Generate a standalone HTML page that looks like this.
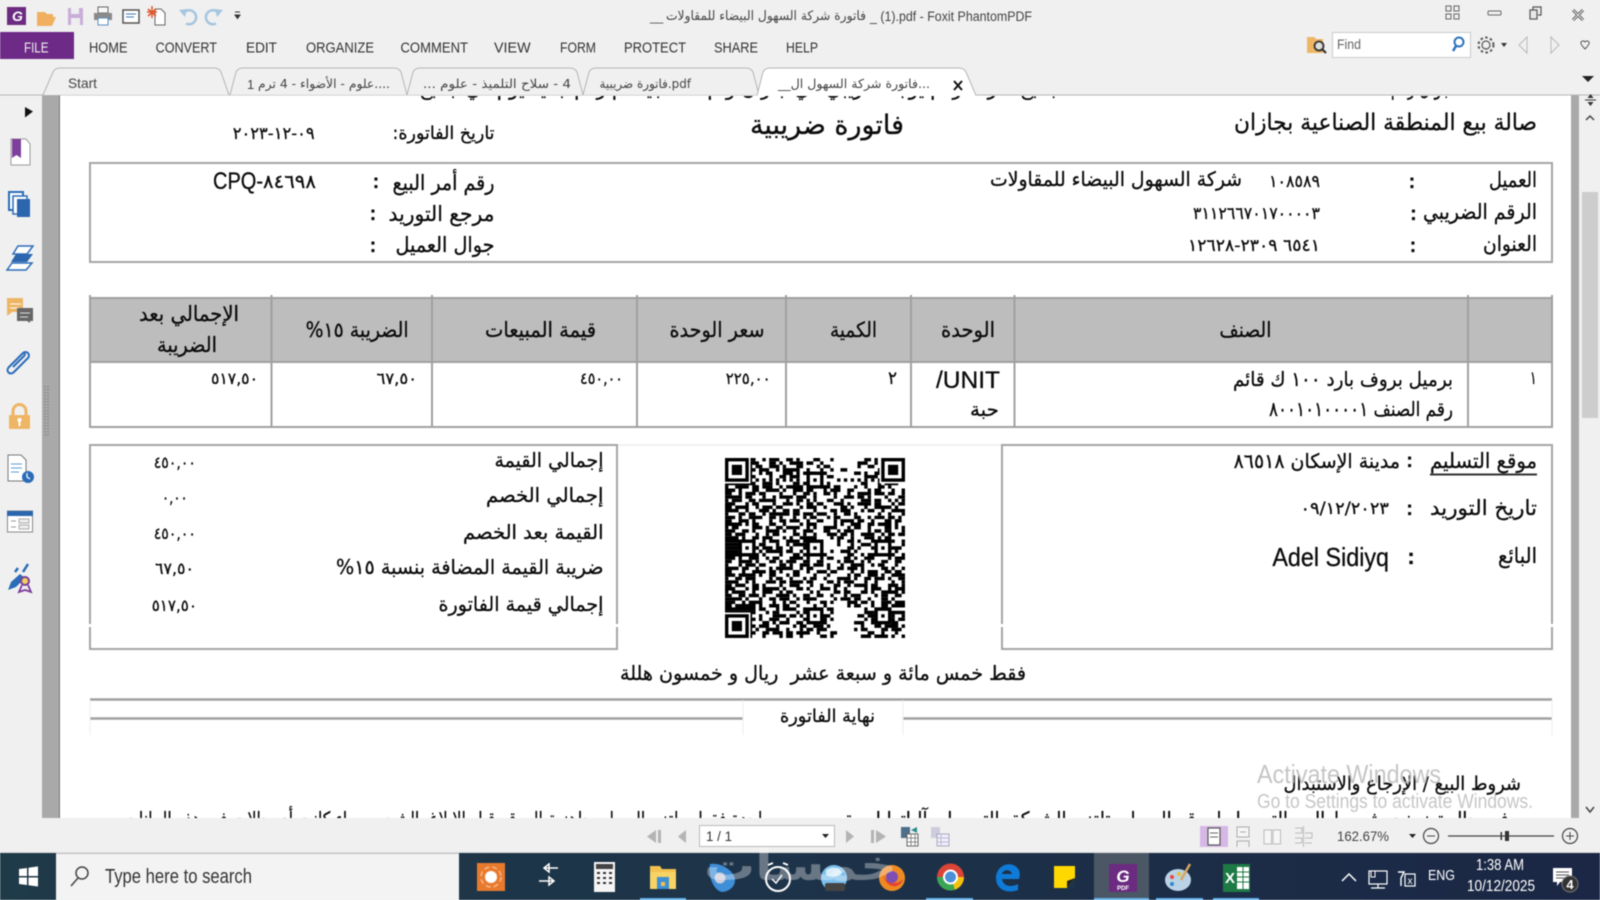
<!DOCTYPE html>
<html lang="en"><head><meta charset="utf-8"><title>Foxit PhantomPDF</title>
<style>
html,body{margin:0;padding:0;width:1600px;height:900px;overflow:hidden;background:#f0f0f0}
svg{display:block;filter:blur(.55px)}
text{fill:#1a1a1a;white-space:pre}
.r{direction:rtl;font-family:"DejaVu Sans","Liberation Sans",sans-serif}
.n{direction:ltr;font-family:"DejaVu Sans","Liberation Sans",sans-serif}
.l{direction:ltr;font-family:"Liberation Sans","DejaVu Sans",sans-serif}
.m{font-size:15px;fill:#333}
.d{stroke:#a6a6a6;stroke-width:2;fill:none}
.tab{fill:#f0f0f0;stroke:#b5b5b5;stroke-width:1}
.doc text{fill:#0c0c0c;stroke:#0c0c0c;stroke-width:.3px}
</style></head><body>
<svg xmlns="http://www.w3.org/2000/svg" width="1600" height="900" viewBox="0 0 1600 900">
<defs>
<clipPath id="page"><rect x="60" y="96" width="1511" height="722"/></clipPath>
<g id="fi"><rect x="-.5" y="-.5" width="8" height="8" fill="#fff"/><rect width="7" height="7" fill="#000"/><rect x="1" y="1" width="5" height="5" fill="#fff"/><rect x="2" y="2" width="3" height="3" fill="#000"/></g>
<g id="al"><rect width="5" height="5" fill="#000"/><rect x="1" y="1" width="3" height="3" fill="#fff"/><rect x="2" y="2" width="1" height="1" fill="#000"/></g>
<linearGradient id="tb" x1="0" x2="1" y1="0" y2="0"><stop offset="0" stop-color="#1f3a48"/><stop offset=".5" stop-color="#1d3349"/><stop offset="1" stop-color="#1b2745"/></linearGradient>
</defs>

<!-- chrome base -->
<rect width="1600" height="900" fill="#f0f0f0"/>
<rect x="60" y="95" width="1511" height="723" fill="#fff"/>
<rect x="42" y="95" width="17" height="723" fill="#a9a9a9"/><rect x="59" y="95" width="1" height="723" fill="#777"/>
<rect x="1571" y="95" width="8" height="723" fill="#a9a9a9"/>
<rect x="1582" y="192" width="16" height="226" fill="#cdcdcd"/>
<path d="M45 386v51M48 386v51" stroke="#8a8a8a" stroke-width="1.5" stroke-dasharray="1.5 1.5"/>

<!-- quick toolbar -->
<rect x="7" y="7" width="19" height="18" fill="#6a2b80"/><text class="l" x="12" y="21" font-size="14" font-weight="700" font-style="italic" style="fill:#fff">G</text>
<path d="M37 12h8l2 2h6v3h3l-4 9H37z" fill="#f0b060"/>
<rect x="68" y="8" width="15" height="17" fill="#c9aedb"/><rect x="71" y="8" width="8" height="6" fill="#eee"/><rect x="71" y="18" width="9" height="7" fill="#eee"/>
<rect x="98" y="7" width="10" height="6" fill="#f7f7f7" stroke="#666"/><rect x="94" y="13" width="18" height="7" fill="#8a8a8a"/><rect x="98" y="18" width="10" height="7" fill="#fff" stroke="#5b8fc6"/>
<rect x="123" y="10" width="16" height="13" fill="#fff" stroke="#555" stroke-width="1.5"/><path d="M126 14h10M126 17h8" stroke="#3a78b8"/>
<path d="M155 9h6l4 4v12h-10z" fill="#fff" stroke="#666"/><path d="M148 9l8 7M156 9l-8 7M152 6v12M147 12h10" stroke="#e0572a" stroke-width="1.5"/>
<path d="M184 12.500a7 7 0 1 1 2 11" fill="none" stroke="#a5c6e0" stroke-width="2.500"/><path d="M179 10l8-1-2 8z" fill="#a5c6e0"/>
<path d="M218 12.500a7 7 0 1 0-2 11" fill="none" stroke="#a5c6e0" stroke-width="2.500"/><path d="M223 10l-8-1 2 8z" fill="#a5c6e0"/>
<path d="M235 12h5M235 15h5l-2.500 3.500z" stroke="#333" fill="#333"/>

<!-- title -->
<text class="r" x="866" y="20" font-size="13" textLength="200" lengthAdjust="spacingAndGlyphs" style="fill:#444">فاتورة شركة السهول البيضاء للمقاولات</text>
<text class="l" x="650" y="21" font-size="12" style="fill:#444">__</text>
<text class="l" x="870" y="21" font-size="13.500" textLength="162" lengthAdjust="spacingAndGlyphs" style="fill:#444">_ (1).pdf - Foxit PhantomPDF</text>

<!-- window controls -->
<path d="M1446 6h5v5h-5zM1454 6h5v5h-5zM1446 14h5v5h-5zM1454 14h5v5h-5z" fill="none" stroke="#666" stroke-width="1"/>
<rect x="1488" y="11" width="13" height="4" fill="none" stroke="#666" stroke-width="1" rx="1"/>
<rect x="1530" y="10" width="7" height="9" fill="#e8e8e8" stroke="#555" stroke-width="1.200"/><path d="M1533 10V7h8v8h-3" fill="none" stroke="#555" stroke-width="1.200"/>
<path d="M1573 10l10 10M1583 10l-10 10" stroke="#555" stroke-width="3"/><path d="M1573 10l10 10M1583 10l-10 10" stroke="#f0f0f0" stroke-width="1"/>

<!-- menu -->
<rect x="0" y="32" width="74" height="27" fill="#6d2a86"/>
<text class="l m" x="24" y="52.500" textLength="24.500" lengthAdjust="spacingAndGlyphs" style="fill:#eee">FILE</text>
<text class="l m" x="89" y="52.500" textLength="38.500" lengthAdjust="spacingAndGlyphs">HOME</text>
<text class="l m" x="155.600" y="52.500" textLength="61.400" lengthAdjust="spacingAndGlyphs">CONVERT</text>
<text class="l m" x="246" y="52.500" textLength="31" lengthAdjust="spacingAndGlyphs">EDIT</text>
<text class="l m" x="306" y="52.500" textLength="68" lengthAdjust="spacingAndGlyphs">ORGANIZE</text>
<text class="l m" x="400.500" y="52.500" textLength="67.500" lengthAdjust="spacingAndGlyphs">COMMENT</text>
<text class="l m" x="494" y="52.500" textLength="36.600" lengthAdjust="spacingAndGlyphs">VIEW</text>
<text class="l m" x="560" y="52.500" textLength="36" lengthAdjust="spacingAndGlyphs">FORM</text>
<text class="l m" x="624" y="52.500" textLength="62" lengthAdjust="spacingAndGlyphs">PROTECT</text>
<text class="l m" x="714" y="52.500" textLength="44" lengthAdjust="spacingAndGlyphs">SHARE</text>
<text class="l m" x="786" y="52.500" textLength="32" lengthAdjust="spacingAndGlyphs">HELP</text>

<!-- find -->
<path d="M1307 37h7l2 2h7v14h-16z" fill="#eeb565"/><circle cx="1319" cy="46" r="4.500" fill="#ddd" stroke="#333" stroke-width="1.800"/><path d="M1322 49l4 4" stroke="#333" stroke-width="2.200"/>
<rect x="1332.500" y="32.500" width="138" height="25" fill="#fff" stroke="#ccc"/>
<text class="l" x="1337" y="49" font-size="14" textLength="24" lengthAdjust="spacingAndGlyphs" style="fill:#666">Find</text>
<circle cx="1459" cy="42" r="4.500" fill="none" stroke="#2d73bd" stroke-width="2"/><path d="M1456 46l-3 5" stroke="#2d73bd" stroke-width="2.500"/>
<circle cx="1486" cy="45" r="4" fill="none" stroke="#555" stroke-width="1.200"/><circle cx="1486" cy="45" r="7.500" fill="none" stroke="#555" stroke-width="2" stroke-dasharray="2.500 2.400"/>
<path d="M1501 43h6l-3 4z" fill="#333"/>
<path d="M1527 37l-8 8 8 8zM1551 37l8 8-8 8z" fill="#f0f0f0" stroke="#b9b9b9"/>
<path d="M1581 42c2-2 3-1 4 0 1-1 2-2 4 0 1 2-2 5-4 7-2-2-5-5-4-7z" fill="none" stroke="#555"/>

<!-- tabs -->
<path d="M0 95H1600" stroke="#b5b5b5"/>
<path class="tab" d="M43 95L53 72Q55 68 60 68H214Q219 68 221 72L229 95"/>
<path class="tab" d="M230 95L236 72Q238 68 243 68H394Q399 68 401 72L407 95"/>
<path class="tab" d="M407 95L413 72Q415 68 420 68H570Q575 68 577 72L583 95"/>
<path class="tab" d="M583 95L589 72Q591 68 596 68H746Q751 68 753 72L759 95"/>
<path d="M757 95.500L763 72Q765 68 770 68H959Q964 68 966 72L976 95.500" fill="#fff" stroke="#b5b5b5"/>
<text class="l" x="68" y="88" font-size="14" textLength="29" lengthAdjust="spacingAndGlyphs" style="fill:#444">Start</text>
<text class="l" x="247" y="89" font-size="13" style="fill:#444">1</text>
<text class="r" x="390" y="88" font-size="12.500" textLength="132" lengthAdjust="spacingAndGlyphs" style="fill:#444">....علوم - الأضواء - 4 ترم</text>
<text class="r" x="571" y="88" font-size="12.500" textLength="148" lengthAdjust="spacingAndGlyphs" style="fill:#444">4 - سلاح التلميذ - علوم ...</text>
<text class="n" x="599.500" y="88" font-size="12.500" textLength="91.500" lengthAdjust="spacingAndGlyphs" style="fill:#444">فاتورة ضريبية.pdf</text>
<text class="r" x="930" y="88" font-size="12.500" textLength="152" lengthAdjust="spacingAndGlyphs" style="fill:#444">...فاتورة شركة السهول ال__</text>
<path d="M954 81l8 9M962 81l-8 9" stroke="#111" stroke-width="2"/>
<path d="M1582 76h12l-6 6z" fill="#222"/>

<!-- sidebar icons -->
<path d="M25 107l8 4.500-8 6z" fill="#111"/>
<path d="M11 139h15l4 5v21H11z" fill="#fff" stroke="#9a9a9a"/><path d="M12 139h9v19l-4.500-3-4.500 3z" fill="#7d3f9c"/>
<rect x="9" y="192" width="14" height="18" fill="#fff" stroke="#2b6cb8" stroke-width="2"/><rect x="13" y="196" width="14" height="18" fill="#fff" stroke="#2b6cb8" stroke-width="1.500"/><rect x="17" y="199" width="13" height="18" fill="#2b66ae"/>
<path d="M13 254l5-8h15l-6 8z" fill="#fff" stroke="#2b6cb8" stroke-width="1.500"/><path d="M11 262l5-8h17l-6 8z" fill="#2b66ae"/><path d="M7 270l5-7h20l-6 7z" fill="#fff" stroke="#2b6cb8" stroke-width="1.500"/>
<path d="M7 298h16v14H12l-5 4z" fill="#eeb565"/><path d="M10 304h11M10 308h9" stroke="#fff"/><path d="M17 308h16v13h-3v2l-3-2H17z" fill="#666"/><path d="M20 313h10M20 317h8" stroke="#ddd"/>
<path d="M13 363l10-10c3-3 8 1 5 5l-14 14c-4 4-9-1-5-5l13-13c2-2 4 0 2 2l-11 11" fill="none" stroke="#2b6cb8" stroke-width="2"/>
<path d="M13 417v-6a6.500 6.500 0 0 1 13 0v6" fill="none" stroke="#eeb565" stroke-width="3"/><rect x="9" y="415" width="21" height="14" rx="1" fill="#eeb565"/><circle cx="19.500" cy="420" r="2" fill="#fff"/><rect x="18.500" y="420" width="2" height="6" fill="#fff"/>
<path d="M8 455h13l5 5v21H8z" fill="#fff" stroke="#777"/><path d="M11 464h11M11 468h11M11 472h8" stroke="#5b9bd5"/><circle cx="28" cy="477" r="6" fill="#2b6cb8"/><path d="M27 473v4l3 2" stroke="#fff" stroke-width="1.200" fill="none"/>
<rect x="7.500" y="511" width="25" height="21" fill="#fff" stroke="#888"/><rect x="7" y="511" width="26" height="5" fill="#2b66ae"/><rect x="19" y="519" width="10" height="4" fill="#eee" stroke="#999" stroke-width=".8"/><rect x="19" y="525" width="10" height="4" fill="#eee" stroke="#999" stroke-width=".8"/><path d="M11 521h5M11 527h5" stroke="#999"/>
<path d="M8 590l3-8 9-8 5 4-9 9z" fill="#2b6cb8"/><path d="M23 572l5-8M18 568l-3 4" stroke="#2b6cb8" stroke-width="2.500"/><circle cx="25" cy="581" r="4" fill="#f0d060" stroke="#7d3f9c" stroke-width="2"/><path d="M22 585l-3 7 6-2 6 2-3-7" fill="none" stroke="#7d3f9c" stroke-width="1.800"/>

<!-- scrollbar glyphs -->
<path d="M1585 100h11" stroke="#333"/><path d="M1590.500 94l-3 4h6zM1590.500 106l-3-4h6z" fill="#333"/>
<path d="M1586 120l4-4 4 4" fill="none" stroke="#444" stroke-width="1.500"/>
<path d="M1586 807l4 5 4-5" fill="none" stroke="#444" stroke-width="1.500"/>

<!-- document -->
<g clip-path="url(#page)" class="doc">
<text class="r" x="1451" y="95" font-size="20" textLength="60" lengthAdjust="spacingAndGlyphs">جوال رقم</text>
<text class="r" x="1060" y="95" font-size="20" textLength="640" lengthAdjust="spacingAndGlyphs">جميع شركة رقم يوجد ضريبي في جازان وتم ذلك جيد ثم رقم جديد يوم في جميع</text>

<text class="r" x="1537" y="130" font-size="23" textLength="303" lengthAdjust="spacingAndGlyphs">صالة بيع المنطقة الصناعية بجازان</text>
<text class="r" x="904" y="134" font-size="27" textLength="154" lengthAdjust="spacingAndGlyphs">فاتورة ضريبية</text>
<text class="r" x="494.500" y="139" font-size="18" textLength="102" lengthAdjust="spacingAndGlyphs">تاريخ الفاتورة:</text>
<text class="n" x="232.700" y="139" font-size="17" textLength="82" lengthAdjust="spacingAndGlyphs">٠٩-١٢-٢٠٢٣</text>

<rect class="d" x="90" y="163" width="1462" height="99"/>
<path d="M90 262H1552" stroke="#a6a6a6" stroke-width="1.500"/>
<text class="r" x="494.500" y="190" font-size="21" textLength="102" lengthAdjust="spacingAndGlyphs">رقم أمر البيع</text>
<text class="l" x="376" y="188" font-size="20" font-weight="700" text-anchor="middle">:</text>
<text class="l" x="213" y="189" font-size="24" textLength="50" lengthAdjust="spacingAndGlyphs">CPQ-</text>
<text class="n" x="263" y="188" font-size="19" textLength="53" lengthAdjust="spacingAndGlyphs">٨٤٦٩٨</text>
<text class="r" x="494.500" y="221" font-size="21" textLength="106" lengthAdjust="spacingAndGlyphs">مرجع التوريد</text>
<text class="l" x="373" y="220" font-size="20" font-weight="700" text-anchor="middle">:</text>
<text class="r" x="494.500" y="252" font-size="21" textLength="99" lengthAdjust="spacingAndGlyphs">جوال العميل</text>
<text class="l" x="373" y="252" font-size="20" font-weight="700" text-anchor="middle">:</text>

<text class="r" x="1537" y="187" font-size="21" textLength="48" lengthAdjust="spacingAndGlyphs">العميل</text>
<text class="l" x="1412" y="188" font-size="20" font-weight="700" text-anchor="middle">:</text>
<text class="n" x="1269" y="187" font-size="17" textLength="51" lengthAdjust="spacingAndGlyphs">١٠٨٥٨٩</text>
<text class="r" x="1242" y="186" font-size="20" textLength="252" lengthAdjust="spacingAndGlyphs">شركة السهول البيضاء للمقاولات</text>
<text class="r" x="1537" y="219" font-size="21" textLength="114" lengthAdjust="spacingAndGlyphs">الرقم الضريبي</text>
<text class="l" x="1413.500" y="220" font-size="20" font-weight="700" text-anchor="middle">:</text>
<text class="n" x="1193" y="219" font-size="17" textLength="127" lengthAdjust="spacingAndGlyphs">٣١١٢٦٦٧٠١٧٠٠٠٠٣</text>
<text class="r" x="1537" y="251" font-size="21" textLength="54" lengthAdjust="spacingAndGlyphs">العنوان</text>
<text class="l" x="1413" y="252" font-size="20" font-weight="700" text-anchor="middle">:</text>
<text class="r" x="1320" y="251" font-size="17" textLength="132" lengthAdjust="spacingAndGlyphs">٦٥٤١ ٢٣٠٩-١٢٦٢٨</text>

<!-- table -->
<rect x="90" y="298" width="1462" height="64" fill="#bdbdbd"/>
<path d="M90 298H1552M90 362H1552M90 427H1552" stroke="#a0a0a0" stroke-width="2"/>
<path d="M90 295V428M271.500 295V428M432 295V428M637 295V428M786 295V428M911 295V428M1014.500 295V428M1468 295V428M1552 295V428" stroke="#a0a0a0" stroke-width="2"/>
<text class="r" x="1271.400" y="337" font-size="21" textLength="52" lengthAdjust="spacingAndGlyphs">الصنف</text>
<text class="r" x="995" y="337" font-size="21" textLength="54" lengthAdjust="spacingAndGlyphs">الوحدة</text>
<text class="r" x="877" y="337" font-size="21" textLength="47" lengthAdjust="spacingAndGlyphs">الكمية</text>
<text class="r" x="764.500" y="337" font-size="21" textLength="95" lengthAdjust="spacingAndGlyphs">سعر الوحدة</text>
<text class="r" x="596" y="337" font-size="21" textLength="111" lengthAdjust="spacingAndGlyphs">قيمة المبيعات</text>
<text class="r" x="408.600" y="337" font-size="21" textLength="103" lengthAdjust="spacingAndGlyphs">الضريبة ١٥%</text>
<text class="r" x="239" y="321" font-size="21" textLength="100" lengthAdjust="spacingAndGlyphs">الإجمالي بعد</text>
<text class="r" x="217" y="352" font-size="21" textLength="60" lengthAdjust="spacingAndGlyphs">الضريبة</text>

<text class="n" x="211" y="384" font-size="16" textLength="47" lengthAdjust="spacingAndGlyphs">٥١٧,٥٠</text>
<text class="n" x="376.600" y="384" font-size="16" textLength="40.400" lengthAdjust="spacingAndGlyphs">٦٧,٥٠</text>
<text class="n" x="580" y="384" font-size="16" textLength="43" lengthAdjust="spacingAndGlyphs">٤٥٠,٠٠</text>
<text class="n" x="725.700" y="384" font-size="16" textLength="45" lengthAdjust="spacingAndGlyphs">٢٢٥,٠٠</text>
<text class="n" x="888" y="384" font-size="18" textLength="9" lengthAdjust="spacingAndGlyphs">٢</text>
<text class="l" x="936" y="388" font-size="24" textLength="64" lengthAdjust="spacingAndGlyphs">/UNIT</text>
<text class="r" x="999" y="416" font-size="19" textLength="29" lengthAdjust="spacingAndGlyphs">حبة</text>
<text class="r" x="1453" y="386" font-size="20" textLength="220" lengthAdjust="spacingAndGlyphs">برميل بروف بارد ١٠٠ ك قائم</text>
<text class="r" x="1453" y="416" font-size="20" textLength="184" lengthAdjust="spacingAndGlyphs">رقم الصنف ٨٠٠١٠١٠٠٠٠١</text>
<text class="n" x="1530" y="384" font-size="18" textLength="6.500" lengthAdjust="spacingAndGlyphs">١</text>

<!-- lower boxes -->
<path d="M617 445H1002" stroke="#eee" stroke-width="1.500"/>
<rect class="d" x="90" y="445" width="527" height="204"/>
<rect class="d" x="1002" y="445" width="550" height="204"/>
<path d="M90 624v3M617 624v3M1002 624v3M1552 624v3" stroke="#fff" stroke-width="3"/>

<text class="r" x="603.500" y="467" font-size="20" textLength="109" lengthAdjust="spacingAndGlyphs">إجمالي القيمة</text>
<text class="r" x="603.500" y="502" font-size="20" textLength="117.500" lengthAdjust="spacingAndGlyphs">إجمالي الخصم</text>
<text class="r" x="603.500" y="539" font-size="20" textLength="140.500" lengthAdjust="spacingAndGlyphs">القيمة بعد الخصم</text>
<text class="r" x="603.500" y="574" font-size="20" textLength="267.500" lengthAdjust="spacingAndGlyphs">ضريبة القيمة المضافة بنسبة ١٥%</text>
<text class="r" x="603.500" y="611" font-size="20" textLength="165" lengthAdjust="spacingAndGlyphs">إجمالي قيمة الفاتورة</text>
<text class="n" x="153.700" y="468" font-size="16" textLength="42.300" lengthAdjust="spacingAndGlyphs">٤٥٠,٠٠</text>
<text class="n" x="162" y="503" font-size="16" textLength="25.600" lengthAdjust="spacingAndGlyphs">٠,٠٠</text>
<text class="n" x="153.700" y="539" font-size="16" textLength="42.300" lengthAdjust="spacingAndGlyphs">٤٥٠,٠٠</text>
<text class="n" x="155" y="574" font-size="16" textLength="39" lengthAdjust="spacingAndGlyphs">٦٧,٥٠</text>
<text class="n" x="151.700" y="611" font-size="16" textLength="45.300" lengthAdjust="spacingAndGlyphs">٥١٧,٥٠</text>

<text class="r" x="1537" y="468" font-size="21" textLength="107" lengthAdjust="spacingAndGlyphs">موقع التسليم</text>
<path d="M1430 474.500H1537" stroke="#333" stroke-width="2"/>
<text class="l" x="1409.600" y="467" font-size="20" font-weight="700" text-anchor="middle">:</text>
<text class="r" x="1400" y="468" font-size="20" textLength="166.400" lengthAdjust="spacingAndGlyphs">مدينة الإسكان ٨٦٥١٨</text>
<text class="r" x="1537" y="515" font-size="21" textLength="107" lengthAdjust="spacingAndGlyphs">تاريخ التوريد</text>
<text class="l" x="1409.600" y="515" font-size="20" font-weight="700" text-anchor="middle">:</text>
<text class="n" x="1300.500" y="514" font-size="17" textLength="88.500" lengthAdjust="spacingAndGlyphs">٠٩/١٢/٢٠٢٣</text>
<text class="r" x="1537" y="563" font-size="21" textLength="39" lengthAdjust="spacingAndGlyphs">البائع</text>
<text class="l" x="1411" y="564" font-size="22" font-weight="700" text-anchor="middle">:</text>
<text class="l" x="1272.400" y="566" font-size="26" textLength="116.600" lengthAdjust="spacingAndGlyphs">Adel Sidiyq</text>

<!-- QR -->
<g transform="translate(725 458) scale(3.396)" fill="none" stroke="#000" stroke-width="1.020">
<path d="M0 .5H53" stroke-dasharray="9 2 1 1 3 2 2 1 1 4 2 3 1"/>
<path d="M0 1.500H53" stroke-dasharray="10 3 2 1 1 2 4 1 2 2 1"/>
<path d="M0 2.500H53" stroke-dasharray="8 1 2 2 3 1 1 3 2 4 1 1 2"/>
<path d="M0 3.500H53" stroke-dasharray="9 1 3 2 1 1 5 2 1 3 1 2 1 2 2"/>
<path d="M0 4.500H53" stroke-dasharray="8 2 1 1 2 3 3 1 1 1 4 2 1"/>
<path d="M0 5.500H53" stroke-dasharray="9 4 1 2 2 1 3 3 1 1 2 1 2"/>
<path d="M0 6.500H53" stroke-dasharray="8 1 1 1 1 1 1 1 1 1 1 1 1 1 1 2 1"/>
<path d="M0 7.500H53" stroke-dasharray="9 2 3 1 1 4 2 1 2 3 1 1 1"/>
<path d="M0 8.500H53" stroke-dasharray="1 2 4 1 2 1 3 2 1 1 5 2 2 1 3"/>
<path d="M0 9.500H53" stroke-dasharray="3 1 1 3 2 2 4 1 1 2 3 1 2"/>
<path d="M0 10.500H53" stroke-dasharray="2 2 1 1 3 1 2 4 1 3 1 2 2 1 1"/>
<path d="M0 11.500H53" stroke-dasharray="5 1 2 3 1 2 1 1 4 1 3 2 1"/>
<path d="M0 12.500H53" stroke-dasharray="1 1 3 2 2 1 5 3 1 2 2 1 1"/>
<path d="M0 13.500H53" stroke-dasharray="3 3 1 1 2 4 1 2 3 1 1 2 2 1 2"/>
<path d="M0 14.500H53" stroke-dasharray="2 1 4 2 1 1 3 1 2 5 1 1 3"/>
<path d="M0 15.500H53" stroke-dasharray="4 2 1 3 3 1 1 2 2 1 2 4 1"/>
<path d="M0 16.500H53" stroke-dasharray="1 3 2 1 2 2 1 1 6 1 2 1 3"/>
<path d="M0 17.500H53" stroke-dasharray="3 1 1 2 4 2 2 1 1 3 1 2 1 1 2"/>
<path d="M0 18.500H53" stroke-dasharray="2 2 3 1 1 4 1 2 2 1 3 2 1"/>
<path d="M0 19.500H53" stroke-dasharray="5 1 1 1 2 3 2 2 1 4 1 1 3"/>
<path d="M0 20.500H53" stroke-dasharray="1 1 2 4 3 1 1 2 2 1 4 2 1"/>
<path d="M0 21.500H53" stroke-dasharray="3 2 2 1 1 3 4 1 1 2 1 2 3"/>
<path d="M0 22.500H53" stroke-dasharray="2 1 3 3 1 2 1 1 2 4 2 1 1"/>
<path d="M0 23.500H53" stroke-dasharray="4 1 1 2 2 1 3 3 1 1 1 2 5"/>
<path d="M0 24.500H53" stroke-dasharray="6 1 2 2 1 1 3 2 4 1 2 1 1"/>
<path d="M0 25.500H53" stroke-dasharray="5 1 3 1 2 3 1 2 1 1 4 2 2"/>
<path d="M0 26.500H53" stroke-dasharray="7 2 1 1 3 1 2 2 1 3 3 1 2"/>
<path d="M0 27.500H53" stroke-dasharray="4 1 2 3 1 1 5 1 2 2 1 1 3"/>
<path d="M0 28.500H53" stroke-dasharray="6 2 2 1 1 4 1 3 2 1 1 2 4"/>
<path d="M0 29.500H53" stroke-dasharray="3 1 1 2 3 2 1 1 2 3 4 1 1"/>
<path d="M0 30.500H53" stroke-dasharray="2 2 4 1 1 3 2 1 1 1 3 2 2"/>
<path d="M0 31.500H53" stroke-dasharray="1 3 1 1 3 1 2 4 2 1 1 2 3"/>
<path d="M0 32.500H53" stroke-dasharray="4 1 2 2 1 3 1 1 5 2 1 1 2"/>
<path d="M0 33.500H53" stroke-dasharray="2 3 1 2 4 1 2 1 1 3 2 2 1"/>
<path d="M0 34.500H53" stroke-dasharray="3 1 5 1 1 2 2 3 1 1 2 4 1"/>
<path d="M0 35.500H53" stroke-dasharray="1 2 2 1 3 4 1 1 2 2 1 3 1"/>
<path d="M0 36.500H53" stroke-dasharray="4 2 1 1 1 3 3 1 2 1 4 1 2"/>
<path d="M0 37.500H53" stroke-dasharray="2 1 3 2 2 1 1 4 1 2 3 3 1"/>
<path d="M0 38.500H53" stroke-dasharray="3 3 1 1 2 1 5 1 1 3 2 1 1"/>
<path d="M0 39.500H53" stroke-dasharray="1 1 4 2 1 2 3 2 1 1 2 5 1"/>
<path d="M0 40.500H53" stroke-dasharray="2 2 2 1 3 1 1 3 4 1 1 2 2"/>
<path d="M0 41.500H53" stroke-dasharray="5 1 1 3 1 2 2 1 3 2 1 1 4"/>
<path d="M0 42.500H53" stroke-dasharray="3 2 1 1 4 3 1 2 1 1 2 3 1"/>
<path d="M0 43.500H53" stroke-dasharray="2 1 6 1 1 2 3 1 2 2 1 4 1"/>
<path d="M0 44.500H53" stroke-dasharray="9 1 2 3 1 1 4 2 1 2 3 1 2"/>
<path d="M0 45.500H53" stroke-dasharray="9 3 1 1 2 5 1 1 3 1 2 2 1"/>
<path d="M0 46.500H53" stroke-dasharray="8 2 1 3 4 1 2 1 1 2 1 3 2"/>
<path d="M0 47.500H53" stroke-dasharray="9 1 1 2 3 2 1 4 1 1 5 1 1"/>
<path d="M0 48.500H53" stroke-dasharray="8 3 2 1 1 1 3 2 2 3 1 2 1"/>
<path d="M0 49.500H53" stroke-dasharray="9 1 3 2 1 4 1 1 2 2 3 1 1"/>
<path d="M0 50.500H53" stroke-dasharray="8 1 1 2 4 2 1 3 1 1 2 1 3"/>
<path d="M0 51.500H53" stroke-dasharray="9 2 2 1 3 1 2 1 4 2 1 3 2"/>
<path d="M0 52.500H53" stroke-dasharray="8 3 1 4 1 1 2 2 1 5 2 1 1"/>
<use href="#fi" x="0" y="0" stroke="none"/><use href="#fi" x="46" y="0" stroke="none"/><use href="#fi" x="0" y="46" stroke="none"/>
<g stroke="none"><use href="#al" x="4" y="24"/><use href="#al" x="24" y="4"/><use href="#al" x="24" y="24"/><use href="#al" x="44" y="24"/><use href="#al" x="24" y="44"/><use href="#al" x="44" y="44"/></g>
</g>

<text class="r" x="1026" y="680" font-size="20" textLength="406" lengthAdjust="spacingAndGlyphs">فقط خمس مائة و سبعة عشر  ريال و خمسون هللة</text>
<path d="M90 699.500H1552" stroke="#a0a0a0" stroke-width="2.500"/>
<path d="M90 718.500H743M903 718.500H1552" stroke="#a0a0a0" stroke-width="2.500"/>
<path d="M90 700V735M743 700V735M903 700V735M1552 700V735" stroke="#eee"/>
<text class="r" x="875" y="722" font-size="18" textLength="95" lengthAdjust="spacingAndGlyphs">نهاية الفاتورة</text>

<text class="r" x="1521" y="790" font-size="19" textLength="237.500" lengthAdjust="spacingAndGlyphs">شروط البيع / الإرجاع والاستبدال</text>
<text class="r" x="1509" y="826" font-size="20" textLength="664" lengthAdjust="spacingAndGlyphs">في حال تضمنت شروط البيع التوصيل لموقع العميل، تلتزم الشركة بالتوصيل بآلياتها لمرة</text>
<text class="r" x="770" y="826" font-size="20" textLength="646" lengthAdjust="spacingAndGlyphs">واحدة فقط ويلتزم العميل بجاهزية الموقع قبل الإبلاغ بالشحن سواء كانت أي حالات في هذه البيانات</text>
</g>

<!-- activation watermark -->
<text class="l" x="1257" y="783" font-size="26" textLength="184" lengthAdjust="spacingAndGlyphs" style="fill:#bcbcbc;opacity:.85">Activate Windows</text>
<text class="l" x="1257" y="808" font-size="20" textLength="276" lengthAdjust="spacingAndGlyphs" style="fill:#bcbcbc;opacity:.85">Go to Settings to activate Windows.</text>

<!-- status bar -->
<rect x="0" y="818" width="1600" height="35" fill="#f0f0f0"/>
<path d="M0 852.500H1600" stroke="#ddd"/>
<path d="M656 830l-9 6.500 9 6.500zM658 830h3v13h-3z" fill="#b4b4b4"/>
<path d="M686 830l-8 6.500 8 6.500z" fill="#b4b4b4"/>
<rect x="699.500" y="825.500" width="135" height="21" fill="#fff" stroke="#bbb"/>
<text class="l" x="706" y="841" font-size="14" textLength="26" lengthAdjust="spacingAndGlyphs" style="fill:#333">1 / 1</text>
<path d="M822 834h7l-3.500 4z" fill="#222"/>
<path d="M846 830l8 6.500-8 6.500z" fill="#b4b4b4"/>
<path d="M871 830h3v13h-3zM876 830l10 6.500-10 6.500z" fill="#b4b4b4"/>
<rect x="901" y="827" width="9" height="11" fill="#4d6f8a"/><rect x="907" y="834" width="11" height="12" fill="#fff" stroke="#666"/><path d="M907 838h11M907 842h11M911 834v12M915 834v12" stroke="#888"/><path d="M911 830l6-3v6z" fill="#2b8a8a"/>
<rect x="931" y="827" width="9" height="11" fill="#ccd" /><rect x="937" y="834" width="12" height="12" fill="#eef" stroke="#aab"/><path d="M937 838h12M937 842h12M941 834v12" stroke="#bbc"/>
<rect x="1200" y="826" width="28" height="21" fill="#d6b8e6"/>
<rect x="1208" y="828" width="12" height="17" fill="#fff" stroke="#555" stroke-width="1.200"/><path d="M1210 833h8M1210 837h8" stroke="#666"/>
<rect x="1237" y="827" width="12" height="10" fill="#f6f6f6" stroke="#aaa"/><path d="M1237 841h12v6M1237 847v-6M1240 832h6" fill="none" stroke="#aaa"/>
<rect x="1264" y="830" width="7.500" height="14" fill="#f6f6f6" stroke="#bbb"/><rect x="1273" y="830" width="7.500" height="14" fill="#f6f6f6" stroke="#bbb"/>
<path d="M1295 828h7v5h-7M1295 838h7v5h-7M1305 833h7v5h-7M1305 843h7M1303.500 826v21" fill="none" stroke="#bbb"/>
<text class="l" x="1337" y="841" font-size="14" textLength="52" lengthAdjust="spacingAndGlyphs" style="fill:#444">162.67%</text>
<path d="M1409 834h7l-3.500 4z" fill="#222"/>
<circle cx="1431" cy="836" r="7.500" fill="none" stroke="#444" stroke-width="1.200"/><path d="M1427 836h8" stroke="#444"/>
<path d="M1448 836H1554" stroke="#444" stroke-width="1.200"/><rect x="1500.500" y="832" width="1.500" height="8" fill="#333"/><rect x="1505" y="831" width="4" height="10" fill="#333"/>
<circle cx="1570" cy="836" r="7.500" fill="none" stroke="#444" stroke-width="1.200"/><path d="M1566 836h8M1570 832v8" stroke="#444"/>

<!-- taskbar -->
<rect x="0" y="853" width="1600" height="47" fill="url(#tb)"/>
<rect x="56" y="853" width="403" height="47" fill="#f3f3f3"/><path d="M56 853.500H459" stroke="#bfbfbf"/>
<path d="M19 869l8-1v8h-8zM28.500 867.700l9.500-1.300v9.600h-9.500zM19 877.500h8v7.500l-8-1zM28.500 877.500H38v9l-9.500-1.300z" fill="#fff"/>
<circle cx="82" cy="873" r="6" fill="none" stroke="#444" stroke-width="1.500"/><path d="M78 878l-7 8" stroke="#444" stroke-width="1.500"/>
<text class="l" x="105" y="883" font-size="20" textLength="147" lengthAdjust="spacingAndGlyphs" style="fill:#333">Type here to search</text>

<rect x="477" y="863" width="28" height="28" fill="#e87a2e"/><circle cx="491" cy="877" r="6" fill="#fff"/><circle cx="491" cy="877" r="10" fill="none" stroke="#f7b78a" stroke-width="1.500" stroke-dasharray="5 3"/>
<path d="M558 868h-14M544 868l5-4v8zM539 881h15M554 881l-5-4v8z" stroke="#fff" fill="#111" stroke-width="1.500"/>
<rect x="594" y="862" width="21" height="30" fill="#f5f5f5"/><rect x="596" y="864" width="17" height="5" fill="#444"/><path d="M597 873h3M603 873h3M609 873h3M597 878h3M603 878h3M609 878h3M597 883h3M603 883h3M609 883h3" stroke="#333" stroke-width="2"/>
<path d="M650 866h10l2 3h14v20h-26z" fill="#f2c14e"/><rect x="650" y="872" width="26" height="17" fill="#f7d365"/><rect x="657" y="877" width="12" height="12" fill="#3d8fd6"/><rect x="661" y="882" width="4" height="4" fill="#f2c14e"/>
<rect x="640" y="898" width="46" height="2" fill="#63b3ed"/>
<path d="M710 864c12-2 25 8 25 16s-8 12-13 12c-9-2-14-16-12-28z" fill="#3f8fd8"/><circle cx="720" cy="878" r="5.500" fill="#ccd"/>
<circle cx="778" cy="879" r="12" fill="#1d3349" stroke="#fff" stroke-width="2"/><path d="M772 879l4 4 6-8" fill="none" stroke="#fff" stroke-width="1.500"/><path d="M768 865l5-2M788 865l-5-2" stroke="#fff" stroke-width="2"/>
<circle cx="834" cy="878" r="13" fill="#7ec0ee"/><path d="M826 870c6-4 14-3 16 3-4 4-10 5-16 2z" fill="#d8eefc"/><rect x="825" y="883" width="20" height="8" rx="2" fill="#444"/>
<circle cx="892" cy="878" r="13" fill="#ee8a23"/><path d="M882 872c3 12 15 14 21 7 -1 8-16 14-21-7z" fill="#e8432e"/><circle cx="892" cy="877" r="6" fill="#7d4fb3"/>
<circle cx="950.500" cy="877" r="13.500" fill="#db4437"/><path d="M937 877a13.500 13.500 0 0 0 19 12.300l-5.500-12.300z" fill="#3aa655"/><path d="M964 877a13.500 13.500 0 0 1-9 12.700L950.500 877z" fill="#f4c20d"/><circle cx="950.500" cy="877" r="6.500" fill="#4a90d9" stroke="#fff" stroke-width="2"/>
<rect x="926" y="898" width="47" height="2" fill="#63b3ed"/>
<path d="M1019 879h-17c1 7 9 9 16 5v6c-10 4-22 0-22-12 0-13 16-19 23-8 1 3 1 6 0 9zM1002 874h10c-1-5-9-5-10 0z" fill="#0f7bd8"/>
<rect x="1054" y="866" width="21" height="22" fill="#ffd800"/><path d="M1075 878v10h-8z" fill="#1d3349"/><path d="M1075 878l-8 10v-7z" fill="#222"/>
<rect x="1094" y="853" width="55" height="47" fill="#4b5764"/><rect x="1109" y="864" width="28" height="28" fill="#6a2b80"/><text class="l" x="1123" y="882" font-size="17" font-weight="700" font-style="italic" text-anchor="middle" style="fill:#fff">G</text><text class="l" x="1123" y="890" font-size="6" font-weight="700" text-anchor="middle" style="fill:#fff">PDF</text>
<rect x="1094" y="898" width="55" height="2" fill="#63b3ed"/>
<ellipse cx="1178" cy="880" rx="13" ry="11" fill="#b9d3e5"/><circle cx="1172" cy="877" r="2" fill="#e44"/><circle cx="1179" cy="874" r="2" fill="#eb3"/><circle cx="1172" cy="884" r="2" fill="#38c"/><path d="M1181 880l9-16" stroke="#d9a45f" stroke-width="2.500"/>
<rect x="1156" y="898" width="47" height="2" fill="#63b3ed"/>
<rect x="1223" y="864" width="27" height="28" fill="#1e7a45"/><rect x="1237" y="867" width="12" height="22" fill="#fff"/><path d="M1237 872h12M1237 877h12M1237 882h12M1243 867v22" stroke="#1e7a45"/><text class="l" x="1230" y="883" font-size="15" font-weight="700" text-anchor="middle" style="fill:#fff">X</text>
<rect x="1213" y="898" width="46" height="2" fill="#63b3ed"/>

<text class="r" x="897" y="880" font-size="42" font-weight="700" textLength="193" lengthAdjust="spacingAndGlyphs" style="fill:#fff;opacity:.33">خمسات</text>

<path d="M1342 881l7-7 7 7" fill="none" stroke="#fff" stroke-width="1.500"/>
<rect x="1369" y="871" width="18" height="13" fill="none" stroke="#fff" stroke-width="1.200"/><rect x="1371" y="871" width="4" height="6" fill="#1b2745" stroke="#fff"/><path d="M1378 884v4h-7h14" fill="none" stroke="#fff" stroke-width="1.200"/>
<rect x="1405" y="874" width="10" height="12" fill="none" stroke="#fff" stroke-width="1.200"/><text class="l" x="1410" y="884" font-size="10" text-anchor="middle" style="fill:#fff">x</text><path d="M1398 872h6l-3 6v8" fill="none" stroke="#fff" stroke-width="1.400"/>
<text class="l" x="1428" y="880" font-size="14.500" textLength="27" lengthAdjust="spacingAndGlyphs" style="fill:#fff">ENG</text>
<text class="l" x="1476" y="870" font-size="15.500" textLength="48" lengthAdjust="spacingAndGlyphs" style="fill:#fff">1:38 AM</text>
<text class="l" x="1467" y="891" font-size="15.500" textLength="68" lengthAdjust="spacingAndGlyphs" style="fill:#fff">10/12/2025</text>
<path d="M1553 868h19v14h-12l-3 4v-4h-4z" fill="#fff"/><path d="M1556 872h13M1556 875h13M1556 878h9" stroke="#555"/>
<circle cx="1570" cy="884" r="8" fill="#333" stroke="#777"/><text class="l" x="1570" y="889" font-size="13" font-weight="700" text-anchor="middle" style="fill:#fff">4</text>
</svg>
</body></html>
